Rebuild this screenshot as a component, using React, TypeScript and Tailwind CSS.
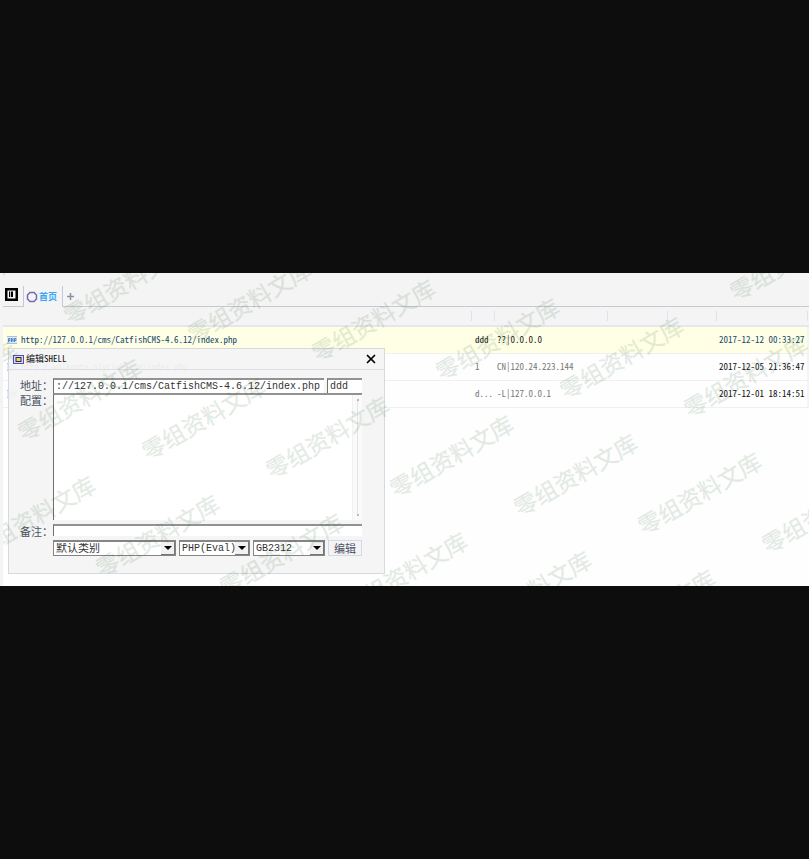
import { X } from 'lucide-react';

type Shell = {
  url: string;
  note: string;
  ip: string;
  time: string;
  active?: boolean;
};

const shells: Shell[] = [
  { url: 'http://127.0.0.1/cms/CatfishCMS-4.6.12/index.php', note: 'ddd', ip: '??|0.0.0.0', time: '2017-12-12 00:33:27', active: true },
  { url: 'http://walknote.hlyclub.com/index.php', note: '1', ip: 'CN|120.24.223.144', time: '2017-12-05 21:36:47' },
  { url: '', note: 'd...', ip: '-L|127.0.0.1', time: '2017-12-01 18:14:51' },
];

const small = "font-['Noto_Sans_Mono_CJK_SC','Noto_Sans_CJK_SC',monospace] text-[9px] leading-3";
const field = "font-['Liberation_Mono','Noto_Sans_CJK_SC',monospace] text-[#333]";
const sunken = 'border-t-2 border-l border-t-[#929292] border-l-[#707070] bg-white';

function Watermark() {
  const marks: { x: number; y: number }[] = [];
  for (let j = -3; j <= 2; j++) {
    for (let i = -7; i <= 5; i++) {
      const x = 572 + 124 * i - 46 * j;
      const y = 201 + 18.7 * i + 117 * j;
      if (x > -50 && x < 850 && y > -30 && y < 340) marks.push({ x, y });
    }
  }
  return (
    <svg className="pointer-events-none absolute inset-0 z-20 h-full w-full overflow-hidden" aria-hidden="true">
      {marks.map((m, k) => (
        <text
          key={k}
          transform={`translate(${m.x} ${m.y}) rotate(-30)`}
          textAnchor="middle"
          dominantBaseline="central"
          className="fill-[#1e5a28] stroke-[#1e5a28] stroke-[0.3px] font-['Noto_Sans_CJK_SC',sans-serif] text-[23px] opacity-12"
        >
          零组资料文库
        </text>
      ))}
    </svg>
  );
}

function Picker({ label, value, width, text }: { label: string; value: string; width: string; text: string }) {
  return (
    <span className={`relative block h-4 ${width}`}>
      <select
        aria-label={label}
        className={`block h-4 w-full appearance-none border border-t-2 border-[#858585] bg-white pl-0.5 leading-3 ${field} ${text}`}
      >
        <option>{value}</option>
      </select>
      <span className="pointer-events-none absolute top-0.5 right-px flex h-[13px] w-[14px] items-center justify-center border-r border-b border-[#777] bg-[#f1f1f1]">
        <svg viewBox="0 0 8 4" className="h-1 w-2">
          <path d="M0 0h8L4 4z" fill="#000" />
        </svg>
      </span>
    </span>
  );
}

function EditDialog() {
  return (
    <div
      role="dialog"
      aria-label="编辑SHELL"
      className="absolute top-[75px] left-[5px] z-10 w-[377px] border border-[#d6d8e2] bg-[#f4f4f4]/95 pb-[17px]"
    >
      <div className="flex h-[21px] items-center border-b border-[#dcdee6] pr-1.5 pl-1">
        <svg viewBox="0 0 11 9" className="h-[9px] w-[11px]">
          <rect x=".5" y=".5" width="10" height="8" fill="#dcdcf6" stroke="#5050b0" />
          <rect x="3" y="2.5" width="5" height="4" fill="#f5dc28" stroke="#22228c" />
        </svg>
        <h2 className={`ml-0.5 flex-1 text-[#111] ${small}`}>编辑SHELL</h2>
        <button aria-label="关闭" className="text-black">
          <X size={14} strokeWidth={3} />
        </button>
      </div>
      <form className="grid grid-cols-[33px_1fr] pt-2 pr-[22px] pl-[11px] font-['Noto_Sans_CJK_SC',sans-serif] text-[11px] leading-[15px] text-[#4a5262]">
        <label htmlFor="address">地址：</label>
        <div className="flex h-[15px] gap-[3px]">
          <input id="address" defaultValue="://127.0.0.1/cms/CatfishCMS-4.6.12/index.php" className={`min-w-0 flex-1 rounded-none pl-0.5 text-[10px] ${sunken} ${field}`} />
          <input aria-label="密码" defaultValue="ddd" className={`w-[35px] rounded-none pl-0.5 text-[10px] ${sunken} ${field}`} />
        </div>
        <label htmlFor="config">配置：</label>
        <div className="relative">
          <textarea id="config" className={`block h-[127px] w-full resize-none text-[10px] ${sunken} ${field}`} />
          <span className="absolute top-0.5 right-0 bottom-0 flex w-[10px] flex-col items-center justify-between border-l border-[#f2f2f2] bg-[#fafafa] py-1">
            <span className="size-0.5 bg-[#bbb]" />
            <span className="w-px flex-1 bg-[#e4e4e4]" />
            <span className="size-0.5 bg-[#bbb]" />
          </span>
        </div>
        <label htmlFor="remark" className="mt-1">备注：</label>
        <input id="remark" className={`mt-1 h-3 rounded-none text-[10px] ${sunken} ${field}`} />
        <div className="col-start-2 flex gap-[3px] pt-px">
          <Picker label="类别" value="默认类别" width="w-[123px]" text="text-[11px]" />
          <Picker label="脚本类型" value="PHP(Eval)" width="w-[71px]" text="text-[10px]" />
          <Picker label="编码" value="GB2312" width="w-[72px]" text="text-[10px]" />
          <button type="button" className="h-4 flex-1 border border-[#d6d8e2] bg-[#f4f4f6] leading-[14px]">编辑</button>
        </div>
      </form>
    </div>
  );
}

export default function App() {
  return (
    <div className="flex min-h-screen flex-col justify-center bg-[#0d0d0d]">
      <main className="relative min-h-[313px] overflow-hidden border-l-3 border-[#f4f4f4] bg-[#fefefe]">
        <nav className="flex h-[34px] items-end bg-[#f4f4f4]">
          <div className="flex h-[21px] w-[21px] items-center border-r border-b border-[#c6c8d8] pl-0.5">
            <svg viewBox="0 0 13 13" className="-mt-1 size-[13px]">
              <path d="M0 0h13v13H0z" fill="#000" />
              <path d="M2.5 2.5h8v8h-8z" fill="#f4f4f4" />
              <path d="M4 3.5h1v5.5H4zM5.8 3.5H8V9H5.8z" fill="#000" />
            </svg>
          </div>
          <button className={`flex h-[21px] w-[39px] items-center gap-px border-r border-[#c6c8d8] pl-0.5 font-bold text-[#38a8f4] ${small}`}>
            <svg viewBox="0 0 12 12" className="size-3 shrink-0">
              <path d="M4 1.5h4L10.5 4v4L8 10.5H4L1.5 8V4z" fill="#f4f4f4" stroke="#7468b8" strokeWidth="1.5" />
            </svg>
            首页
          </button>
          <div className="flex h-[21px] flex-1 items-center border-b border-[#c6c8d2] pl-1">
            <button aria-label="新建" className="text-[#8493a0]">
              <svg viewBox="0 0 7 7" className="size-[7px]">
                <path d="M3.5 0v7M0 3.5h7" stroke="currentColor" strokeWidth="1.5" />
              </svg>
            </button>
          </div>
        </nav>
        <table className={`w-full table-fixed border-collapse ${small}`}>
          <colgroup>
            <col />
            <col className="w-[23px]" />
            <col className="w-[113px]" />
            <col className="w-[60px]" />
            <col className="w-[49px]" />
            <col className="w-[91px]" />
            <col className="w-[2px]" />
          </colgroup>
          <thead>
            <tr className="h-[19px] border-b-2 border-[#e6e7eb] bg-[#f4f4f4]">
              {[0, 1, 2, 3, 4, 5, 6].map((c) => (
                <th key={c} className="p-0">
                  {c > 0 && <span className="block h-[10px] w-px bg-[#e2e3e8]" />}
                </th>
              ))}
            </tr>
          </thead>
          <tbody>
            {shells.map((s) => (
              <tr key={s.time} className={`h-[27px] border-b border-[#f0f0f2] whitespace-nowrap ${s.active ? 'bg-[#ffffe6] text-[#222]' : 'text-[#777]'}`}>
                <td className="p-0 pl-1">
                  <a href="#shell" className={`flex items-center gap-1 ${s.active ? 'text-[#17496f]' : 'text-[#333]'}`}>
                    <svg viewBox="0 0 10 8" className="h-2 w-[10px]">
                      <path d="M0 0h10v8H0z" fill="#dfeafa" />
                      <path d="M0 .5h10M0 7.5h10" stroke="#a3c2ea" />
                      <path d="M1.5 6V2.5h1.5v2H1.5M4.5 2v4M6 2v4M4.5 4H6M7.5 6V2.5H9v2H7.5" fill="none" stroke="#3a6fae" strokeWidth=".8" />
                    </svg>
                    {s.url}
                  </a>
                </td>
                <td className="p-0 pl-1">{s.note}</td>
                <td className="p-0 pl-[3px]">{s.ip}</td>
                <td className="p-0" />
                <td className="p-0" />
                <td className={`p-0 pl-[3px] ${s.active ? 'text-[#17496f]' : 'text-[#111]'}`}>{s.time}</td>
                <td className="bg-[#f4f4f4] p-0" />
              </tr>
            ))}
          </tbody>
        </table>
        <EditDialog />
        <Watermark />
      </main>
    </div>
  );
}
